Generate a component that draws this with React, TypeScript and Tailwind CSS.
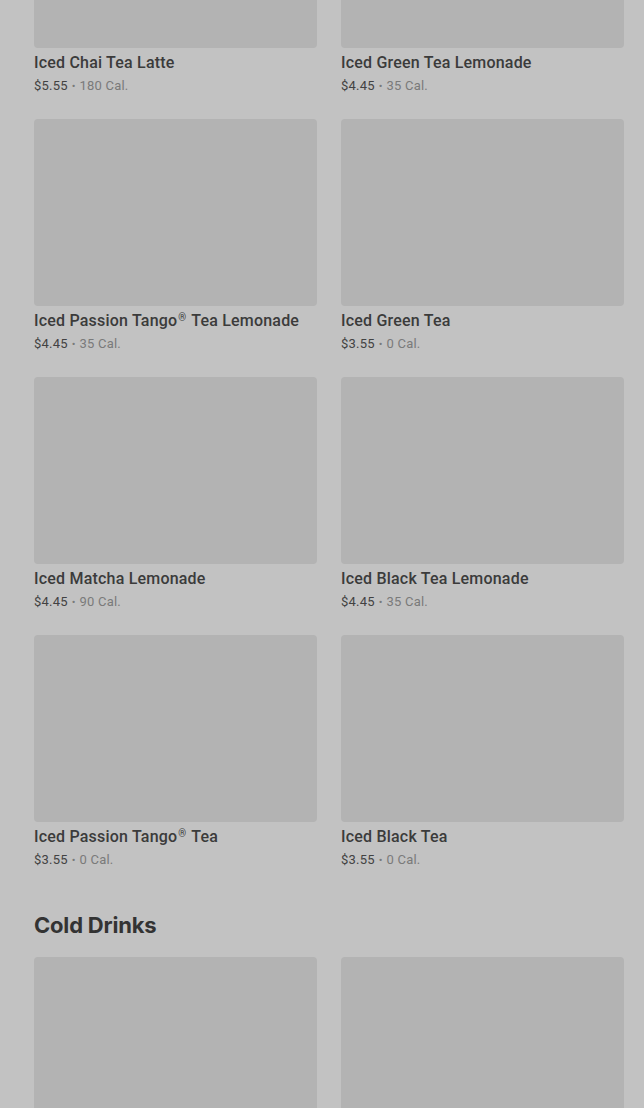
import React from 'react';

interface Drink {
    name: string;
    price: string;
    cal: string;
}

const teas: Drink[] = [
    { name: 'Iced Chai Tea Latte', price: '$5.55', cal: '180 Cal.' },
    { name: 'Iced Green Tea Lemonade', price: '$4.45', cal: '35 Cal.' },
    { name: 'Iced Passion Tango® Tea Lemonade', price: '$4.45', cal: '35 Cal.' },
    { name: 'Iced Green Tea', price: '$3.55', cal: '0 Cal.' },
    { name: 'Iced Matcha Lemonade', price: '$4.45', cal: '90 Cal.' },
    { name: 'Iced Black Tea Lemonade', price: '$4.45', cal: '35 Cal.' },
    { name: 'Iced Passion Tango® Tea', price: '$3.55', cal: '0 Cal.' },
    { name: 'Iced Black Tea', price: '$3.55', cal: '0 Cal.' },
];

// render the ® as a small raised mark like the menu does
function Name({ text }: { text: string }) {
    const parts = text.split('®');
    return (
        <>
            {parts.map((p, i) => (
                <React.Fragment key={i}>
                    {p}
                    {i < parts.length - 1 && (
                        <span className="text-[10px] leading-none relative -top-[5px] mx-[1px]">®</span>
                    )}
                </React.Fragment>
            ))}
        </>
    );
}

function DrinkCard({ drink }: { drink: Drink }) {
    return (
        <div className="flex flex-col">
            <div className="h-[187px] shrink-0 rounded-sm bg-[#b3b3b3]" />
            <div className="mt-[3px] h-[24px] text-[16px] leading-[24px] font-medium text-[#3b3b3b] tracking-[0.2px]">
                <Name text={drink.name} />
            </div>
            <div className="h-[22px] text-[13px] leading-[22px] text-[#424242] tracking-[0.2px]">
                {drink.price}
                <span className="text-[#7a7a7a]">
                    <span className="text-[11px] mx-[4px]">•</span>
                    {drink.cal}
                </span>
            </div>
        </div>
    );
}

export default function App() {
    return (
        <div
            className="w-[644px] h-[1108px] overflow-hidden bg-[#c2c2c2] pl-[34px] pr-[20px]"
            style={{ fontFamily: 'Roboto, "Noto Sans", sans-serif' }}
        >
            <div className="grid grid-cols-2 gap-x-[24px] gap-y-[22px] -mt-[139px]">
                {teas.map((t) => (
                    <DrinkCard key={t.name} drink={t} />
                ))}
            </div>

            <h2
                className="mt-[40px] text-[22px] leading-[28px] font-bold text-[#333333] tracking-[-0.2px]"
                style={{ fontFamily: 'Inter, sans-serif' }}
            >
                Cold Drinks
            </h2>

            <div className="grid grid-cols-2 gap-x-[24px] mt-[18px]">
                <div className="h-[187px] rounded-sm bg-[#b3b3b3]" />
                <div className="h-[187px] rounded-sm bg-[#b3b3b3]" />
            </div>
        </div>
    );
}
